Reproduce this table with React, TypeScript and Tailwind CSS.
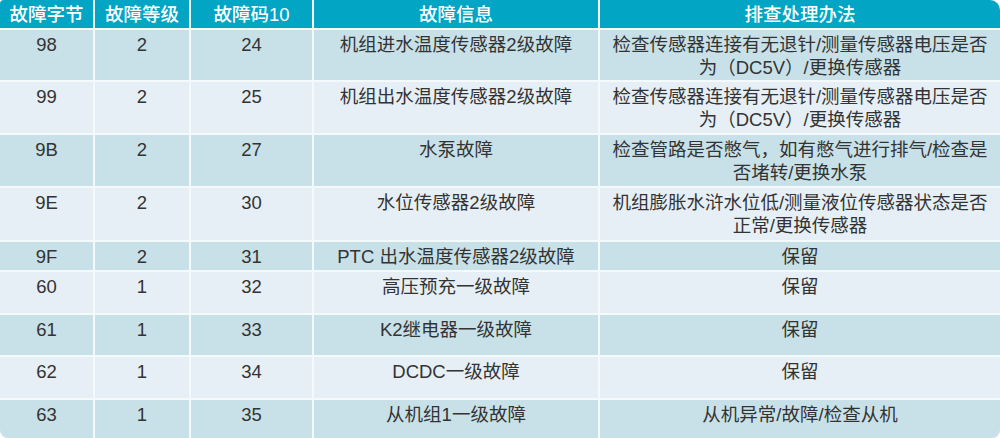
const rows = [
  { b: '98', lv: '2', code: '24', info: '机组进水温度传感器2级故障', fix: '检查传感器连接有无退针/测量传感器电压是否为（DC5V）/更换传感器', h: 'h-[50px]' },
  { b: '99', lv: '2', code: '25', info: '机组出水温度传感器2级故障', fix: '检查传感器连接有无退针/测量传感器电压是否为（DC5V）/更换传感器', h: 'h-[51px]' },
  { b: '9B', lv: '2', code: '27', info: '水泵故障', fix: '检查管路是否憋气，如有憋气进行排气/检查是否堵转/更换水泵', h: 'h-[51px]' },
  { b: '9E', lv: '2', code: '30', info: '水位传感器2级故障', fix: '机组膨胀水浒水位低/测量液位传感器状态是否正常/更换传感器', h: 'h-[52px]' },
  { b: '9F', lv: '2', code: '31', info: 'PTC 出水温度传感器2级故障', fix: '保留', h: 'h-[28px]' },
  { b: '60', lv: '1', code: '32', info: '高压预充一级故障', fix: '保留', h: 'h-[41px]' },
  { b: '61', lv: '1', code: '33', info: 'K2继电器一级故障', fix: '保留', h: 'h-[40px]' },
  { b: '62', lv: '1', code: '34', info: 'DCDC一级故障', fix: '保留', h: 'h-[41px]' },
  { b: '63', lv: '1', code: '35', info: '从机组1一级故障', fix: '从机异常/故障/检查从机', h: 'h-[38px]' },
]

const cols = 'grid grid-cols-[93px_94px_121px_284px_1fr] gap-x-[2px]'

export default function App() {
  return (
    <div className="w-[1000px] h-[438px] bg-white" style={{ fontFamily: '"Liberation Sans", "Noto Sans CJK SC", sans-serif' }}>
      <div className="flex flex-col gap-y-[2px] bg-[#f4f9fb] rounded-tl-[4px] rounded-tr-[10px] rounded-bl-[8px] rounded-br-[8px] overflow-hidden text-[18.5px] leading-[23px] text-[#333333]">
        {/* Header */}
        <div className={`${cols} h-[28px] bg-[#f4f9fb]`}>
          {['故障字节', '故障等级', '故障码10', '故障信息', '排查处理办法'].map((t) => (
            <div key={t} className="bg-[#02a5c4] text-white font-medium flex items-center justify-center">
              {t}
            </div>
          ))}
        </div>

        {/* Rows */}
        {rows.map((r, i) => {
          const bg = i % 2 === 0 ? 'bg-[#c8e1e8]' : 'bg-[#e6eff5]'
          return (
            <div key={r.b} className={`${cols} ${r.h}`}>
              <div className={`${bg} text-center pt-[3px]`}>{r.b}</div>
              <div className={`${bg} text-center pt-[3px]`}>{r.lv}</div>
              <div className={`${bg} text-center pt-[3px]`}>{r.code}</div>
              <div className={`${bg} text-center pt-[3px]`}>{r.info}</div>
              <div className={`${bg} text-center pt-[3px] px-[7px]`}>{r.fix}</div>
            </div>
          )
        })}
      </div>
    </div>
  )
}
